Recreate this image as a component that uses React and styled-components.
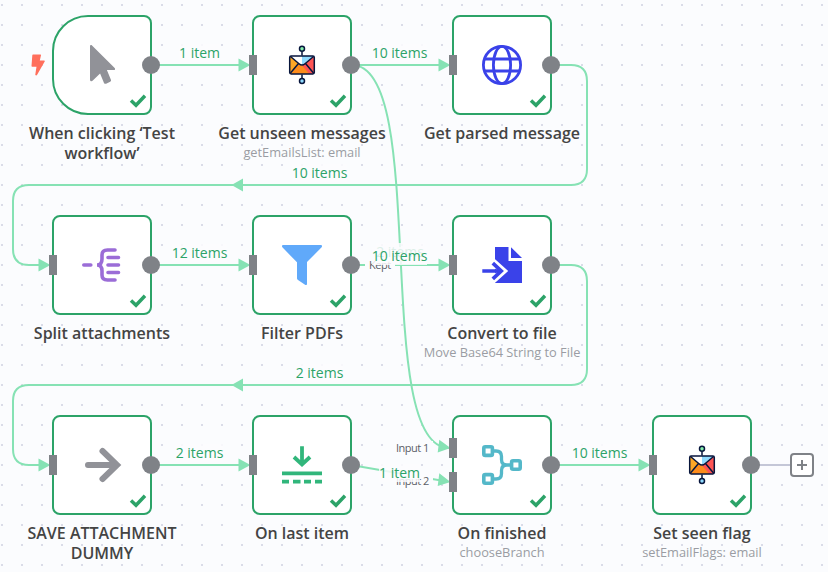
import React from "react";
import styled, { createGlobalStyle } from "styled-components";

const GREEN = "#2ca368";
const WIRE = "#86e2b4";
const GREY = "#7f8287";

const GlobalStyle = createGlobalStyle`
  body { margin: 0; background: #fbfcfe; }
`;

const Canvas = styled.main`
  position: relative;
  width: 828px;
  height: 572px;
  overflow: hidden;
  font-family: "Open Sans", sans-serif;
  background-color: #fbfcfe;
  background-image: conic-gradient(from 90deg at 18px 18px, #dadce8 90deg, transparent 0);
  background-size: 20px 20px;
  background-position: 3px 6px;
`;

const Wires = styled.svg`
  position: absolute;
  inset: 0;
`;

const NodeRoot = styled.article`
  position: absolute;
  left: ${(p) => p.$x - 40}px;
  top: ${(p) => p.$y}px;
  width: 180px;
  display: flex;
  flex-direction: column;
  align-items: center;
`;

const NodeBox = styled.div`
  position: relative;
  box-sizing: border-box;
  width: 100px;
  height: 100px;
  display: flex;
  align-items: center;
  justify-content: center;
  background: #fff;
  border: 2px solid ${GREEN};
  border-radius: ${(p) => (p.$trigger ? "36px 8px 8px 36px" : "8px")};
`;

const Check = styled.svg`
  position: absolute;
  right: 2px;
  bottom: 5px;
`;

const Bolt = styled.svg`
  position: absolute;
  left: -23.5px;
  top: 36.5px;
`;

const OutputPort = styled.i`
  position: absolute;
  right: -10px;
  top: 39px;
  width: 18px;
  height: 18px;
  border-radius: 50%;
  background: ${GREY};
`;

const InputPort = styled.i`
  position: absolute;
  left: -5px;
  top: ${(p) => p.$top}px;
  width: 8px;
  height: 20px;
  background: ${GREY};
`;

const Title = styled.h2`
  margin: 8px 0 0;
  font-size: 16px;
  font-weight: 600;
  line-height: 20px;
  text-align: center;
  color: #444;
`;

const Subtitle = styled.p`
  margin: 0;
  font-size: 12.8px;
  line-height: 18px;
  white-space: nowrap;
  color: #9a9ca3;
`;

const EdgeLabel = styled.span`
  position: absolute;
  left: ${(p) => p.$x - 40}px;
  top: ${(p) => p.$y - 9}px;
  width: 80px;
  display: flex;
  justify-content: center;
  font-size: 14px;
  line-height: 18px;
  white-space: nowrap;
  color: ${GREEN};
`;

const EdgeText = styled.span`
  background: rgba(251, 252, 254, 0.85);
`;

const PortLabel = styled.span`
  position: absolute;
  left: ${(p) => p.$x}px;
  top: ${(p) => p.$y}px;
  font-size: 11px;
  letter-spacing: -0.5px;
  line-height: 14px;
  padding: 0 4px;
  white-space: nowrap;
  color: #5c5e66;
  background: #fbfcfe;
`;

const AddButton = styled.button`
  position: absolute;
  left: 790px;
  top: 453px;
  box-sizing: border-box;
  width: 24px;
  height: 24px;
  padding: 0;
  display: grid;
  place-items: center;
  background: #fff;
  border: 2px solid ${GREY};
  border-radius: 4px;
`;

const Icon = ({ children }) => (
  <svg width="40" height="40" viewBox="0 0 40 40" fill="none" overflow="visible">
    {children}
  </svg>
);

const CursorIcon = () => (
  <Icon>
    <path
      fill="#919298"
      d="M8 1.200c0-1.200 1.200-1.600 2-.8L32.700 23c.9.900.3 2.100-.9 2.100h-6.900l4 9.700c.3.800 0 1.600-.7 1.900l-4.100 2c-.9.400-1.700 0-2.100-.8l-3.900-9.400-7.300 7.100c-1.100 1-2.800.7-2.800-.9z"
    />
  </Icon>
);

const MailIcon = () => (
  <Icon>
    <rect x="8" y="11" width="24" height="18" rx="1" fill="#fff" />
    <path d="M20 11h11.500L20 20z" fill="#8fdafe" />
    <path d="M8 11.500v16.500L17 18.500z" fill="#fda726" />
    <path d="M8 29 17 18.500l3 2 3-2L32 29z" fill="#fd8c1c" />
    <path d="M32 11.500V29H27.500L20 20.500l3-2z" fill="#fe5454" />
    <g stroke="#07153c" strokeWidth="1.500">
      <path d="m8.500 11.500 8.500 7.200q3 2.600 6 0l8.500-7.200M16.500 18.500 8.500 28M23.500 18.500l8 9.500M20 6.500v4M20 29.500v4" />
      <rect x="7.700" y="11" width="24.600" height="18" rx="1.400" />
      <circle cx="20" cy="3.700" r="2.500" fill="#86efac" />
      <circle cx="20" cy="36" r="2.500" fill="#8fdafe" />
    </g>
  </Icon>
);

const GlobeIcon = () => (
  <Icon>
    <g stroke="#3a42e9" strokeWidth="2.800">
      <circle cx="20" cy="20" r="18.600" />
      <ellipse cx="20" cy="20" rx="8.600" ry="18.600" />
      <path d="M2.500 14h35M2.500 26h35" />
    </g>
  </Icon>
);

const SplitIcon = () => (
  <Icon>
    <g stroke="#9b6dd7" strokeWidth="3.600" strokeLinecap="round">
      <path d="M1.800 20h7" />
      <path d="M33 5H25.500Q20 5 20 10v4Q20 20 15 20Q20 20 20 26v4q0 5 5.500 5H33M26 12.500h10.500M26 20h10.500M26 27.500h10.500" />
    </g>
  </Icon>
);

const FilterIcon = () => (
  <Icon>
    <path
      fill="#60a9fa"
      d="M1 0h38q1 0 1 1.200 0 .8-.6 1.400L25 17v22q0 1-.8 1-.8 0-1.500-.5L16 35q-1-.6-1-1.500V17.300L.6 2.600Q0 2 0 1.200 0 0 1 0z"
    />
  </Icon>
);

const FileIcon = () => (
  <Icon>
    <path fill="#3a42e9" d="M13 2h13.500v14H40v22H13z" />
    <path fill="#3a42e9" d="M29 2.200 40 13H29z" />
    <path stroke="#fff" strokeWidth="7" d="M10.500 16.500 21 26 10.500 35.500" />
    <path stroke="#3a42e9" strokeWidth="3.700" d="M.3 26h18.500M10.800 18.200l8.400 7.800-8.400 7.800" />
  </Icon>
);

const ArrowIcon = () => (
  <Icon>
    <g stroke="#919298" strokeWidth="6" strokeLinecap="round">
      <path d="M6 20h28M20.500 6 35 20 20.500 34" />
    </g>
  </Icon>
);

const LastIcon = () => (
  <Icon>
    <g stroke="#31b67b" strokeWidth="3.800">
      <path d="M20 1.200v18M12 12l8 7.500 8-7.500M0 28.300h40" />
      <path d="M0 36.600h7M11 36.600h7.500M22 36.600h7M33 36.600h7" />
    </g>
  </Icon>
);

const MergeIcon = () => (
  <Icon>
    <g stroke="#54b8c9" strokeWidth="3.600">
      <rect x="1.800" y="1.800" width="8.600" height="8.600" rx="1.500" />
      <rect x="1.800" y="29.600" width="8.600" height="8.600" rx="1.500" />
      <rect x="29.600" y="15.700" width="8.600" height="8.600" rx="1.500" />
      <path strokeWidth="3.300" d="M11 6h3q5.500 0 5.500 5.500v3Q19.500 20 25 20h4M11 34h3q5.500 0 5.500-5.500v-3Q19.500 20 25 20" />
    </g>
  </Icon>
);

const nodes = [
  { x: 52, y: 15, title: "When clicking ‘Test workflow’", icon: CursorIcon, trigger: true, inputs: [] },
  { x: 252, y: 15, title: "Get unseen messages", sub: "getEmailsList: email", icon: MailIcon },
  { x: 452, y: 15, title: "Get parsed message", icon: GlobeIcon },
  { x: 52, y: 215, title: "Split attachments", icon: SplitIcon },
  { x: 252, y: 215, title: "Filter PDFs", icon: FilterIcon },
  { x: 452, y: 215, title: "Convert to file", sub: "Move Base64 String to File", icon: FileIcon },
  { x: 52, y: 415, title: "SAVE ATTACHMENT DUMMY", icon: ArrowIcon },
  { x: 252, y: 415, title: "On last item", icon: LastIcon },
  { x: 452, y: 415, title: "On finished", sub: "chooseBranch", icon: MergeIcon, inputs: [21, 55] },
  { x: 652, y: 415, title: "Set seen flag", sub: "setEmailFlags: email", icon: MailIcon },
];

const straight = [
  [151, 65],
  [351, 65],
  [151, 265],
  [351, 265],
  [151, 465],
  [551, 465],
];

const edgeLabels = [
  [199.5, 53, "1 item"],
  [399.5, 53, "10 items"],
  [319.5, 173, "10 items"],
  [199.5, 253, "12 items"],
  [400, 252, "2 items"],
  [399.5, 256, "10 items"],
  [319.5, 373, "2 items"],
  [199.5, 453, "2 items"],
  [399.5, 473, "1 item"],
  [599.5, 453, "10 items"],
];

const loopPath = (y) =>
  `M551 ${y}H571Q587 ${y} 587 ${y + 16}V${y + 104}Q587 ${y + 120} 571 ${y + 120}H29Q13 ${y + 120} 13 ${y + 136}V${y + 184}Q13 ${y + 200} 29 ${y + 200}H42`;

function FlowNode({ x, y, title, sub, icon: Glyph, trigger, inputs = [38] }) {
  return (
    <NodeRoot $x={x} $y={y}>
      <NodeBox $trigger={trigger}>
        {trigger && (
          <Bolt width="14" height="22" viewBox="0 0 14 22">
            <path
              fill="#ff6f5c"
              d="M2 .5h7.400q.8 0 .6.800L8.800 6.500h4.300q1 0 .6 1L6 21q-.5.700-1.300.3-.5-.3-.4-.8L5.500 12.700H1.200q-.8 0-.7-.8L1.300 1.200Q1.400.5 2 .5z"
            />
          </Bolt>
        )}
        <Glyph />
        <Check width="20" height="16" viewBox="0 0 20 16" fill="none">
          <path d="m3 8.500 5 4.700 9-9.500" stroke={GREEN} strokeWidth="3.500" />
        </Check>
        {inputs.map((top) => (
          <InputPort key={top} $top={top} />
        ))}
        <OutputPort />
      </NodeBox>
      <Title>{title}</Title>
      {sub && <Subtitle>{sub}</Subtitle>}
    </NodeRoot>
  );
}

export default function App() {
  return (
    <>
      <GlobalStyle />
      <Canvas>
        <Wires width="828" height="572" fill="none">
          <g stroke={WIRE} strokeWidth="2">
            {straight.map(([x, y]) => (
              <path key={`${x}-${y}`} d={`M${x} ${y}h90`} />
            ))}
            <path d={loopPath(65)} />
            <path d={loopPath(265)} />
            <path d="M352 65C430 65 371 448 449 448" />
            <path d="M351 465 441 480.500" />
          </g>
          <g fill={WIRE}>
            {straight.map(([x, y]) => (
              <path key={`${x}-${y}`} d={`M${x + 87.5} ${y - 6.5}v13l12-6.500z`} />
            ))}
            <path d="M38.500 258.500v13l12-6.500zM38.500 458.500v13l12-6.500zM243 178.500v13l-11.500-6.500zM243 378.500v13l-11.500-6.500z" />
            <path d="M439.300 439.700 437.700 452.500 450.500 448zM439.300 473.300 437.700 486 450.500 482z" />
          </g>
          <path d="M751 465h40" stroke="#c4c7d7" strokeWidth="2" />
        </Wires>
        <PortLabel $x={365} $y={258}>Kept</PortLabel>
        <PortLabel $x={392} $y={441}>Input 1</PortLabel>
        <PortLabel $x={392} $y={474}>Input 2</PortLabel>
        {edgeLabels.map(([x, y, text]) => (
          <EdgeLabel key={`${x}-${y}`} $x={x} $y={y}>
            <EdgeText>{text}</EdgeText>
          </EdgeLabel>
        ))}
        {nodes.map((node) => (
          <FlowNode key={node.title} {...node} />
        ))}
        <AddButton aria-label="Add node">
          <svg width="12" height="12" viewBox="0 0 12 12">
            <path d="M6 1v10M1 6h10" stroke={GREY} strokeWidth="2" />
          </svg>
        </AddButton>
      </Canvas>
    </>
  );
}
